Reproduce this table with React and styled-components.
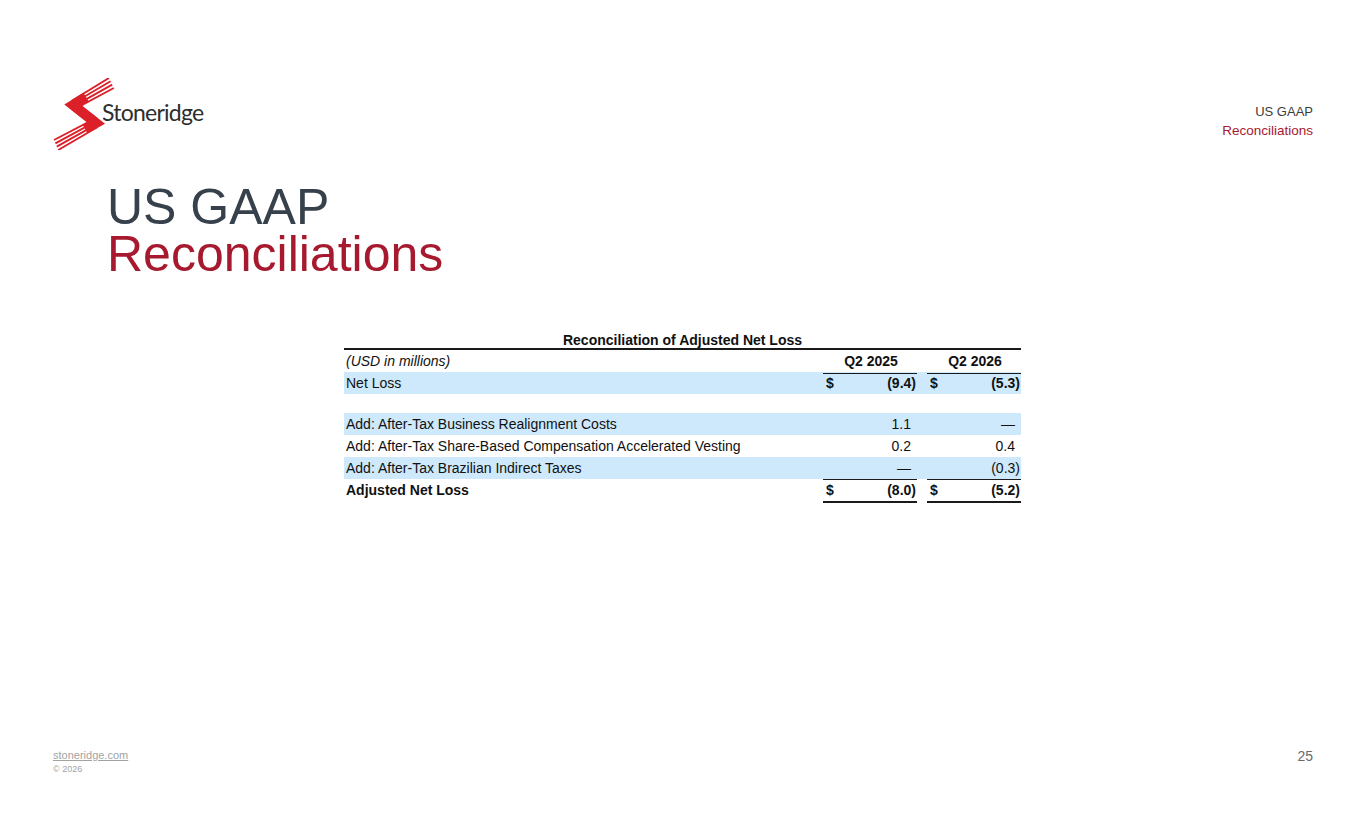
import React from "react";
import styled, { createGlobalStyle } from "styled-components";

const GlobalStyle = createGlobalStyle`
  body {
    margin: 0;
    background: #ffffff;
    font-family: "Liberation Sans", Arial, sans-serif;
  }
`;

const Page = styled.div`
  width: 1365px;
  height: 829px;
  display: flex;
  flex-direction: column;
  background: #ffffff;
  overflow: hidden;
`;

const Header = styled.header`
  display: flex;
  justify-content: space-between;
  align-items: flex-start;
  padding: 78px 52px 0 48px;
`;

const Logo = styled.div`
  display: flex;
  align-items: center;
  height: 72px;
`;

const LogoText = styled.span`
  margin-left: -16px;
  margin-top: -4px;
  font-family: Lato, "Open Sans", sans-serif;
  font-size: 23px;
  letter-spacing: -0.75px;
  color: #2e2e2e;
`;

const Crumb = styled.div`
  margin-top: 26px;
  text-align: right;
`;

const CrumbLine = styled.div`
  margin-top: ${(p) => (p.accent ? "3px" : "0")};
  font-size: ${(p) => (p.accent ? "13.5px" : "13px")};
  line-height: 16px;
  color: ${(p) => (p.accent ? "#a6192e" : "#3c3c3c")};
`;

const Title = styled.h1`
  margin: 34px 0 0 107px;
  font-weight: normal;
  font-size: 50px;
  line-height: 47px;
`;

const TitleLine = styled.span`
  display: block;
  color: ${(p) => (p.accent ? "#a6192e" : "#36414b")};
`;

const Table = styled.div`
  margin: 55px 0 0 344px;
  width: 677px;
  color: #111;
  font-size: 14px;
`;

const Caption = styled.div`
  text-align: center;
  font-weight: bold;
  line-height: 15px;
  border-bottom: 2px solid #1a1a1a;
`;

const Row = styled.div`
  display: grid;
  grid-template-columns: 479px 94px 10px 94px;
  height: ${(p) => (p.spacer ? "19px" : p.total ? "24px" : "22px")};
  background: ${(p) => (p.shaded ? "#cde9fb" : "transparent")};
`;

const Label = styled.div`
  padding-left: 2px;
  line-height: ${(p) => (p.head ? "23px" : "22px")};
  font-style: ${(p) => (p.italic ? "italic" : "normal")};
  font-weight: ${(p) => (p.bold ? "bold" : "normal")};
  white-space: nowrap;
`;

const Cell = styled.div`
  box-sizing: border-box;
  display: flex;
  justify-content: ${(p) => (p.center ? "center" : "space-between")};
  padding: 0 ${(p) => p.pad ?? 1}px 0 3px;
  line-height: ${(p) => (p.center ? "23px" : "22px")};
  font-weight: ${(p) => (p.bold ? "bold" : "normal")};
  border-bottom: ${(p) => p.rule ?? "none"};
  white-space: nowrap;
`;

const Footer = styled.footer`
  margin-top: auto;
  display: flex;
  justify-content: space-between;
  align-items: flex-start;
  padding: 0 52px 54px 53px;
`;

const Site = styled.a`
  display: block;
  font-size: 11px;
  line-height: 14px;
  color: #a3a3a3;
  text-decoration: underline;
`;

const Copy = styled.div`
  margin-top: 1px;
  font-size: 9px;
  line-height: 12px;
  color: #a3a3a3;
`;

const PageNo = styled.div`
  font-size: 14px;
  line-height: 16px;
  color: #6a6a6a;
`;

const LogoMark = () => {
  const offs = [-5, -1.7, 1.7, 5];
  return (
    <svg width="70" height="72" viewBox="0 0 70 72">
      {offs.map((d, i) => (
        <polyline
          key={i}
          points={`${61 + i * 1.6},${5 + d} 25,${27 + d} 48,${45 + d} ${6 + i * 1.4},${67 + d}`}
          fill="none"
          stroke="#dc2029"
          strokeWidth="1.9"
          strokeLinejoin="miter"
        />
      ))}
      <polyline
        points="38,19 25,27 48,45 37,51"
        fill="none"
        stroke="#dc2029"
        strokeWidth="10"
        strokeLinejoin="miter"
      />
    </svg>
  );
};

const Amount = ({ value, dollar, rule, bold }) => {
  const paren = value.startsWith("(");
  return (
    <Cell pad={paren ? 1 : 6} rule={rule} bold={bold}>
      <span>{dollar ? "$" : ""}</span>
      <span>{value}</span>
    </Cell>
  );
};

const thin = "1px solid #1a1a1a";
const thick = "2px solid #1a1a1a";

const rows = [
  { label: "Net Loss", a: "(9.4)", b: "(5.3)", dollar: true, shaded: true, boldNums: true },
  { spacer: true },
  { label: "Add: After-Tax Business Realignment Costs", a: "1.1", b: "—", shaded: true },
  { label: "Add: After-Tax Share-Based Compensation Accelerated Vesting", a: "0.2", b: "0.4" },
  { label: "Add: After-Tax Brazilian Indirect Taxes", a: "—", b: "(0.3)", shaded: true, rule: thin },
  { label: "Adjusted Net Loss", a: "(8.0)", b: "(5.2)", dollar: true, total: true, boldNums: true, rule: thick },
];

export default function App() {
  return (
    <>
      <GlobalStyle />
      <Page>
        <Header>
          <Logo>
            <LogoMark />
            <LogoText>Stoneridge</LogoText>
          </Logo>
          <Crumb>
            <CrumbLine>US GAAP</CrumbLine>
            <CrumbLine accent>Reconciliations</CrumbLine>
          </Crumb>
        </Header>

        <Title>
          <TitleLine>US GAAP</TitleLine>
          <TitleLine accent>Reconciliations</TitleLine>
        </Title>

        <Table>
          <Caption>Reconciliation of Adjusted Net Loss</Caption>
          <Row>
            <Label head italic>
              (USD in millions)
            </Label>
            <Cell center bold rule={thin}>Q2 2025</Cell>
            <div />
            <Cell center bold rule={thin}>Q2 2026</Cell>
          </Row>
          {rows.map((r, i) =>
            r.spacer ? (
              <Row key={i} spacer />
            ) : (
              <Row key={i} shaded={r.shaded} total={r.total}>
                <Label bold={r.total}>{r.label}</Label>
                <Amount value={r.a} dollar={r.dollar} rule={r.rule} bold={r.boldNums} />
                <div />
                <Amount value={r.b} dollar={r.dollar} rule={r.rule} bold={r.boldNums} />
              </Row>
            )
          )}
        </Table>

        <Footer>
          <div>
            <Site>stoneridge.com</Site>
            <Copy>© 2026</Copy>
          </div>
          <PageNo>25</PageNo>
        </Footer>
      </Page>
    </>
  );
}
